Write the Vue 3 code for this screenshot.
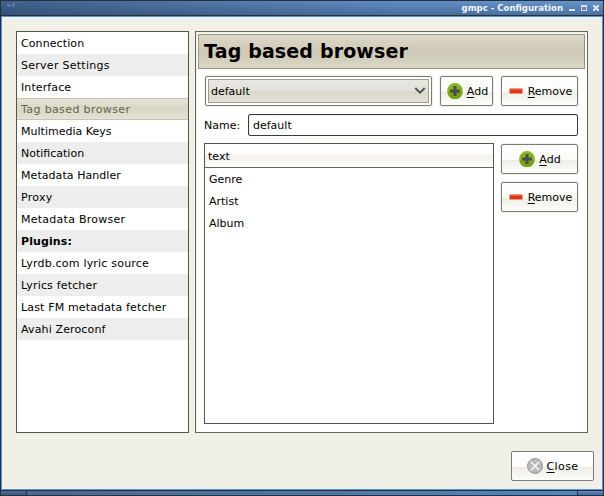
<script setup>
const sections = [
  { name: 'Connection', tracking: 0.1 },
  { name: 'Server Settings', tracking: 0.27 },
  { name: 'Interface', tracking: 0.1 },
  { name: 'Tag based browser', tracking: 0.38, selected: true },
  { name: 'Multimedia Keys', tracking: 0.02 },
  { name: 'Notification', tracking: 0 },
  { name: 'Metadata Handler', tracking: 0.06 },
  { name: 'Proxy', tracking: 0.3 },
  { name: 'Metadata Browser', tracking: 0.26 },
  { name: 'Plugins:', tracking: 0.1, heading: true },
  { name: 'Lyrdb.com lyric source', tracking: 0.2 },
  { name: 'Lyrics fetcher', tracking: 0.17 },
  { name: 'Last FM metadata fetcher', tracking: 0.15 },
  { name: 'Avahi Zeroconf', tracking: 0.14 },
]
const tags = ['Genre', 'Artist', 'Album']
</script>

<template>
  <div class="window">
    <header class="titlebar">
      <svg class="app-icon" width="11" height="12" viewBox="0 0 11 12">
        <path d="M1 2h2v1h2v2h-2v-1h-2zM7 1h2v2h-1v2h-2v-3h1z" fill="#6d93d6" opacity=".6" />
        <path d="M4 4h2v2h-1v3h-2v2h-1v-2h1v-3h1z" fill="#2b4f9c" opacity=".75" />
      </svg>
      <span class="title">gmpc - Configuration</span>
      <svg class="controls" width="32" height="14" viewBox="0 0 32 14" shape-rendering="crispEdges">
        <path d="M0 8h6v2H0z" fill="#dce0e6" />
        <path d="M12 4h6v6h-6z M13 6v3h4V6z" fill="#dce0e6" fill-rule="evenodd" />
        <path d="M24 4h2v1h2V4h2v2h-1v2h1v2h-2V9h-2v1h-2V8h1V6h-1z" fill="#dce0e6" />
      </svg>
    </header>

    <main class="content">
      <div class="panes">
        <ul class="sidebar">
          <li
            v-for="s in sections"
            :key="s.name"
            :class="{ selected: s.selected, heading: s.heading }"
            :style="{ letterSpacing: s.tracking + 'px' }"
          >{{ s.name }}</li>
        </ul>

        <section class="panel">
          <h1>Tag based browser</h1>
          <div class="body">
            <div class="row toolbar">
              <div class="combo">
                <div class="combo-inner">
                  <span>default</span>
                  <svg width="12" height="8" viewBox="0 0 12 8"><path d="M1.3 1 6 5.7 10.7 1" fill="none" stroke="#50504c" stroke-width="1.9" /></svg>
                </div>
              </div>
              <button class="btn small">
                <svg width="16" height="16" viewBox="0 0 16 16"><circle cx="8" cy="8" r="7.9" fill="#87b421" /><path d="M.6 9a7.4 7.4 0 0 0 14.8 0z" fill="#75a315" /><path d="M6.5 3h3v3.5H13v3H9.500V13h-3V9.500H3v-3h3.500z" fill="#4a4c4a" /></svg>
                <span class="label"><u>A</u>dd</span>
              </button>
              <button class="btn wide">
                <svg width="16" height="16" viewBox="0 0 16 16"><path d="M1.500 5.500h13v5h-13z" fill="#dd3517" /><path d="M2 6h12v1H2z" fill="#ed5c43" /></svg>
                <span class="label"><u>R</u>emove</span>
              </button>
            </div>

            <div class="row name-row">
              <span class="name">Name:</span>
              <div class="entry">default</div>
            </div>

            <div class="row lower">
              <div class="table">
                <div class="th">text</div>
                <div v-for="t in tags" :key="t" class="td">{{ t }}</div>
              </div>
              <div class="actions">
                <button class="btn wide">
                  <svg width="16" height="16" viewBox="0 0 16 16"><circle cx="8" cy="8" r="7.9" fill="#87b421" /><path d="M.6 9a7.4 7.4 0 0 0 14.8 0z" fill="#75a315" /><path d="M6.5 3h3v3.5H13v3H9.500V13h-3V9.500H3v-3h3.500z" fill="#4a4c4a" /></svg>
                  <span class="label"><u>A</u>dd</span>
                </button>
                <button class="btn wide">
                  <svg width="16" height="16" viewBox="0 0 16 16"><path d="M1.500 5.500h13v5h-13z" fill="#dd3517" /><path d="M2 6h12v1H2z" fill="#ed5c43" /></svg>
                  <span class="label"><u>R</u>emove</span>
                </button>
              </div>
            </div>
          </div>
        </section>
      </div>

      <footer>
        <button class="btn close">
          <svg width="16" height="16" viewBox="0 0 16 16"><circle cx="8" cy="8" r="7.5" fill="#b9b9b9" stroke="#969696" /><path d="M4 4l8 8M12 4l-8 8" stroke="#f5f5f5" stroke-width="1.7" /></svg>
          <span class="label"><u>C</u>lose</span>
        </button>
      </footer>
    </main>

    <div class="grip"><i></i><i></i><i></i></div>
  </div>
</template>

<style>
body { margin: 0; overflow: hidden; }
</style>

<style scoped>
* { box-sizing: border-box; }
.window {
  width: 604px; height: 496px; display: flex; flex-direction: column;
  border: 1px solid #22303f; background: #22303f;
  font: 11px/22px "DejaVu Sans", sans-serif; color: #000;
}
.titlebar {
  height: 14px; flex: none; display: flex; align-items: center; padding: 0 2px 0 5px;
  background: linear-gradient(90deg, rgba(35, 55, 85, .55), rgba(60, 90, 135, .18) 60%, transparent), linear-gradient(#6795cc, #4a709f);
}
.title {
  margin-left: auto; color: #f4f6f9; font-family: "DejaVu Sans Condensed", "DejaVu Sans", sans-serif; font-stretch: condensed;
  font-weight: bold; font-size: 9.5px; line-height: 14px; white-space: nowrap;
}
.controls { margin-left: 6px; }
.content {
  height: 474px; flex: none; margin-top: 1px; border: 1px solid #5b93d3; background: #f0efe8;
  padding: 14px 8px 7px 14px; display: flex; flex-direction: column;
}
.panes { display: flex; gap: 6px; height: 402px; }
ul { margin: 0; padding: 0; list-style: none; }
.sidebar { width: 173px; border: 1px solid #55564a; background: #fff; }
.sidebar li { height: 22px; padding-left: 4px; line-height: 24px; white-space: nowrap; }
.sidebar li:nth-child(even):not(.selected) { background: #ededed; }
.sidebar .heading { font-weight: bold; }
.sidebar .selected {
  color: #66644f; line-height: 22px; border-top: 1px solid #c9c4ac; border-bottom: 1px solid #c9c4ac;
  background: linear-gradient(#e6e4d8, #d9d6c4 50%, #e4e2d4);
}
.panel { width: 393px; border: 1px solid #66675a; background: #fff; padding: 2px; box-shadow: inset 1px 1px #eeeee5; }
h1 {
  margin: 0; height: 35px; border: 1px solid #9c9678; padding-left: 5px;
  font-size: 19px; line-height: 33px; letter-spacing: .15px;
  background: linear-gradient(#dbd8c9, #d0c9b6 50%, #d9d6c5);
}
.body { padding: 7px 7px 0 6px; }
.row { display: flex; }
.toolbar { padding-left: 1px; }
.combo {
  width: 227px; height: 30px; border: 1px solid #7b7c70; border-radius: 2px; padding: 2px;
  box-shadow: 0 0 0 1px #f0f0ec;
}
.combo-inner {
  height: 24px; border: 1px solid #a39f8b; padding: 0 2px; display: flex; justify-content: space-between; align-items: center;
  background: linear-gradient(#e8e7e2, #e2e1d9 50%, #dad8c9 51%, #e2e1d8);
}
.combo-inner span { line-height: 24px; height: 22px; }
.btn {
  height: 30px; margin: 0; padding: 0; border: 1px solid #7b7c70; border-radius: 2px;
  display: flex; align-items: center; justify-content: center; gap: 4px; font: inherit; color: #000;
  background: linear-gradient(#fff, #fbfbf9 52%, #eeede4 53%, #fdfdfb);
  box-shadow: 0 0 0 1px #efefeb;
}
.label { height: 22px; line-height: 24px; white-space: nowrap; }
.label u { text-underline-offset: 2px; text-decoration-thickness: 1px; text-decoration-skip-ink: none; }
.small { width: 53px; margin-left: 8px; padding-left: 2px; }
.wide { width: 77px; padding-left: 1px; }
.toolbar .wide { margin-left: 8px; }
.name-row { margin-top: 8px; }
.name { width: 44px; height: 22px; line-height: 24px; }
.entry { width: 330px; height: 22px; line-height: 22px; border: 1px solid #3b3b3b; border-radius: 2px; padding-left: 4px; box-shadow: inset 1px 1px #efefeb; }
.lower { margin-top: 7px; gap: 7px; }
.table { width: 290px; height: 281px; border: 1px solid #55564a; }
.th {
  height: 24px; border-bottom: 1px solid #66675a; padding-left: 3px; line-height: 26px;
  background: linear-gradient(#fff, #fcfcfa 48%, #f1f0ea 49%, #fdfdfc);
}
.td { height: 22px; line-height: 24px; padding-left: 4px; }
.actions { display: flex; flex-direction: column; gap: 8px; padding-top: 1px; }
footer { display: flex; justify-content: flex-end; margin-top: 18px; }
.close { width: 83px; }
.close .label { letter-spacing: .4px; }
.grip { height: 4px; flex: none; margin-top: 1px; display: flex; gap: 1px; }
.grip i { background: linear-gradient(#6189bd, #436a9e); }
.grip i:nth-child(1) { width: 25px; background: linear-gradient(#4b6b98, #3c587f); }
.grip i:nth-child(2) { flex: 1; background: linear-gradient(90deg, #47698f, #5485bd); }
.grip i:nth-child(3) { width: 25px; }
</style>
